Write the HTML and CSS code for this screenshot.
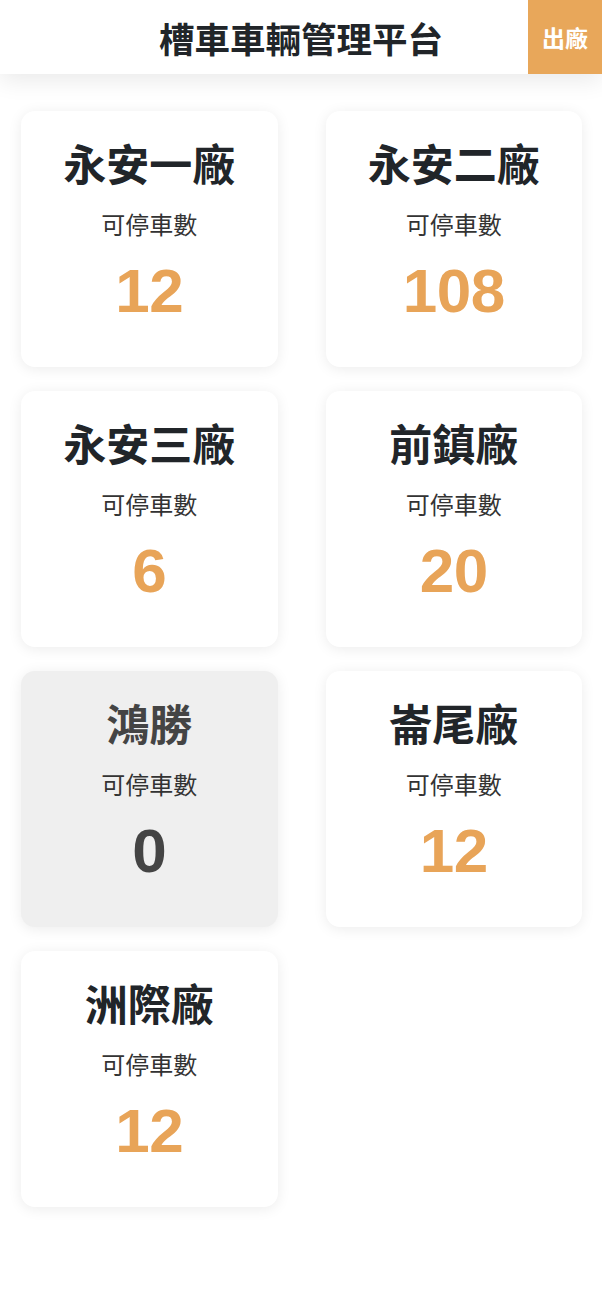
FILE: index.html
```html
<!DOCTYPE html>
<html lang="zh-TW">
<head>
    <meta charset="UTF-8">
    <meta name="viewport" content="width=device-width, initial-scale=1.0">
    <title>槽車車輛管理平台</title>
    <link rel="stylesheet" href="styles.css">
</head>
<body>
    <header class="top-bar">
        <h1 class="top-title">槽車車輛管理平台</h1>
        <button class="out-btn">出廠</button>
    </header>

    <main class="plant-grid">
        <div class="plant-card">
            <div class="plant-name">永安一廠</div>
            <div class="plant-label">可停車數</div>
            <div class="plant-count">12</div>
        </div>
        <div class="plant-card">
            <div class="plant-name">永安二廠</div>
            <div class="plant-label">可停車數</div>
            <div class="plant-count">108</div>
        </div>
        <div class="plant-card">
            <div class="plant-name">永安三廠</div>
            <div class="plant-label">可停車數</div>
            <div class="plant-count">6</div>
        </div>
        <div class="plant-card">
            <div class="plant-name">前鎮廠</div>
            <div class="plant-label">可停車數</div>
            <div class="plant-count">20</div>
        </div>
        <div class="plant-card full">
            <div class="plant-name">鴻勝</div>
            <div class="plant-label">可停車數</div>
            <div class="plant-count">0</div>
        </div>
        <div class="plant-card">
            <div class="plant-name">崙尾廠</div>
            <div class="plant-label">可停車數</div>
            <div class="plant-count">12</div>
        </div>
        <div class="plant-card">
            <div class="plant-name">洲際廠</div>
            <div class="plant-label">可停車數</div>
            <div class="plant-count">12</div>
        </div>
    </main>
</body>
</html>
```

FILE: styles.css
```css
body {
    margin: 0;
    padding: 0;
    background: #fff;
    font-family: "Liberation Sans", "Noto Sans CJK TC", sans-serif;
    color: #212529;
}

.top-bar {
    position: relative;
    display: flex;
    justify-content: center;
    align-items: center;
    height: 74px;
    background: #fff;
    box-shadow: 0 6px 24px rgba(0, 0, 0, 0.09);
    z-index: 10;
}

.top-title {
    margin: 0;
    font-size: 35.5px;
    font-weight: 700;
    color: #212529;
}

/* 出廠按鈕靠右 */
.out-btn {
    position: absolute;
    top: 0;
    right: 0;
    width: 74px;
    height: 74px;
    border: none;
    background: #e8a75a;
    color: #fff;
    font-family: inherit;
    font-size: 23px;
    font-weight: 700;
    padding: 0;
    cursor: pointer;
}

.plant-grid {
    display: grid;
    grid-template-columns: 1fr 1fr;
    column-gap: 48px;
    row-gap: 24px;
    padding: 37px 20px 40px 21px;
}

.plant-card {
    height: 256px;
    box-sizing: border-box;
    padding-top: 29px;
    background: #fff;
    border-radius: 14px;
    box-shadow: 0 2px 14px rgba(0, 0, 0, 0.08);
    text-align: center;
}

.plant-name {
    font-size: 43px;
    font-weight: 700;
    line-height: 52px;
    color: #212529;
}

.plant-label {
    margin-top: 19px;
    font-size: 24px;
    line-height: 30px;
    color: #333;
}

.plant-count {
    margin-top: 18px;
    font-size: 62px;
    font-weight: 700;
    line-height: 64px;
    letter-spacing: -0.5px;
    color: #e8a458;
}

/* 車位已滿 */
.plant-card.full {
    background: #efefef;
}

.plant-card.full .plant-name,
.plant-card.full .plant-count {
    color: #444;
}
```
